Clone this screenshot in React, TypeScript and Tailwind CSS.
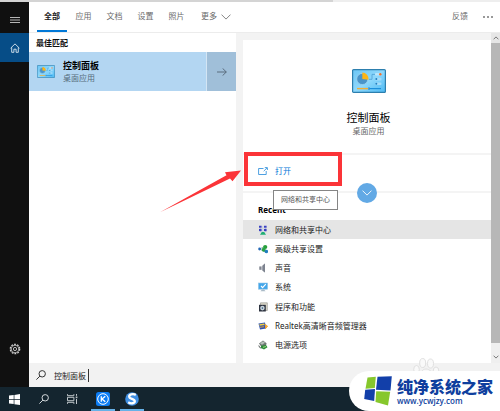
import type { ReactNode } from "react";

const FONT = "font-['Noto_Sans','Noto_Sans_CJK_SC',sans-serif]";

const tabs = ["全部", "应用", "文档", "设置", "照片"];

function ControlPanelIcon({ className }: { className: string }) {
  return (
    <svg viewBox="0 0 34 24" className={className} aria-hidden="true">
      <defs>
        <linearGradient id="panel" x1="0" y1="0" x2="1" y2="1">
          <stop offset="0" stopColor="#6cc6f5" />
          <stop offset=".5" stopColor="#8ed8fc" />
          <stop offset="1" stopColor="#4dbaf4" />
        </linearGradient>
      </defs>
      <rect x=".6" y=".6" width="32.8" height="22.8" rx="1" fill="url(#panel)" stroke="#2d7fae" strokeWidth="1.2" />
      <circle cx="10.3" cy="10" r="5.6" fill="#4a94c9" stroke="#9fd3ee" strokeWidth=".8" />
      <path d="M10.3 10V3.600a6.400 6.400 0 0 1 6.200 7.200z" fill="#fdb515" />
      <path d="M17 10.300h3V5.400h3" fill="none" stroke="#4ba0d4" strokeWidth=".8" />
      <rect x="23" y="4" width="6.500" height="2.600" rx="1" fill="#b8e4fb" />
      <rect x="23" y="8.800" width="6.500" height="2.600" rx="1" fill="#a5dcfa" />
      <rect x="23" y="13.500" width="6.500" height="2.600" rx="1" fill="#a5dcfa" />
      <circle cx="28.300" cy="5.300" r="1.200" fill="#f4702b" />
      <circle cx="24.300" cy="10.100" r="1" fill="#1f7fc0" />
      <circle cx="24.300" cy="14.800" r="1" fill="#1f7fc0" />
      <path d="M5 19.600h11" stroke="#f3ad35" strokeWidth="1.400" />
      <path d="M17.500 19.600H29" stroke="#1c8fdb" strokeWidth="1.200" />
      <path d="M17 18.300v2.600" stroke="#1c76b8" strokeWidth="1" />
    </svg>
  );
}

const NetworkIcon = (
  <svg viewBox="0 0 10 10" className="size-[10px]" aria-hidden="true">
    <path d="M1 .8h2.600v2H1zM6 .8h2.600v2H6zM1 4h2.600v2H1zM6 4h2.600v2H6z" fill="#3940c2" />
    <path d="M1.500 3.300h2M6.500 3.300h2M1.500 6.600h2M6.500 6.600h2" stroke="#8d94cf" strokeWidth=".7" />
    <path d="M4.900 1v6.500" stroke="#a9b8d8" strokeWidth=".6" />
    <path d="M2 9.700 3.800 7h2.400L8 9.700z" fill="#1fae75" />
  </svg>
);

const ShareIcon = (
  <svg viewBox="0 0 10 10" className="size-[10px]" aria-hidden="true">
    <path d="M1.500 5 7 2.400M1.500 5l6 3" stroke="#7fae9b" strokeWidth=".9" />
    <circle cx="1.600" cy="5" r="1.400" fill="#2368b7" />
    <circle cx="7.200" cy="3" r="2.100" fill="#28a03c" />
    <circle cx="5.700" cy="5.800" r="2" fill="#2aa346" />
    <circle cx="8.300" cy="7.500" r="1.800" fill="#217dbe" />
  </svg>
);

const SoundIcon = (
  <svg viewBox="0 0 10 10" className="size-[10px]" aria-hidden="true">
    <path d="M1.500 3.500h2L7 .5v9L3.500 6.800h-2z" fill="#b3b6be" />
    <path d="M4.600 2.500 7 .5v9L4.600 7.700z" fill="#7d838f" />
    <path d="M1.500 3.500h1.200v3.300H1.500z" fill="#6d737f" />
  </svg>
);

const SystemIcon = (
  <svg viewBox="0 0 10 10" className="size-[10px]" aria-hidden="true">
    <rect x=".4" y="1" width="9.200" height="6.200" fill="#43a6ea" stroke="#94c6e6" strokeWidth=".6" />
    <path d="m3 4 1.600 1.600L7.800 2.200" fill="none" stroke="#fff" strokeWidth="1.100" />
    <path d="M2.500 9.200h5L6 7.500H4z" fill="#a9bac7" />
  </svg>
);

const ProgramsIcon = (
  <svg viewBox="0 0 10 10" className="size-[10px]" aria-hidden="true">
    <path d="M2.500.8h6.800v7.700H2.500z" fill="#dcd9c9" stroke="#8b8b86" strokeWidth=".6" />
    <rect x="1" y="2.800" width="6.800" height="6.700" fill="#2e3440" />
    <circle cx="4.400" cy="6.100" r="2.300" fill="#c7d2da" />
    <circle cx="4.400" cy="6.100" r=".8" fill="#3c6382" />
  </svg>
);

const RealtekIcon = (
  <svg viewBox="0 0 10 10" className="size-[10px]" aria-hidden="true">
    <path d="M.5 2.500 7 1.500l1 6-6 1z" fill="#2f55b5" />
    <path d="m1.300 3.300 5-.8.300 1.500-5 .8z" fill="#f3cf3e" />
    <path d="m2 6.300 4-.6M7.300 3.500l2.300 1.700-2 2.300z" stroke="#ef9d2c" strokeWidth=".9" fill="#f3b63a" />
  </svg>
);

const PowerIcon = (
  <svg viewBox="0 0 10 10" className="size-[10px]" aria-hidden="true">
    <path d="m1 3.600 4-3 3.600 2.600-.8 3L3.500 7z" fill="#6d7672" />
    <path d="m2 3.300 3-2 2 1.500-3 2z" fill="#b6c0ba" />
    <path d="M3 5.800 8 5l1.500 2.300L6 9.500 3 8z" fill="#2b8d3a" />
    <path d="m5 7.300 3-.8" stroke="#aadd87" strokeWidth=".9" />
    <path d="M.8 5.500q.5 2.500 2.500 2.700" fill="none" stroke="#43494a" strokeWidth=".9" />
  </svg>
);

const recent: { label: string; icon: ReactNode }[] = [
  { label: "网络和共享中心", icon: NetworkIcon },
  { label: "高级共享设置", icon: ShareIcon },
  { label: "声音", icon: SoundIcon },
  { label: "系统", icon: SystemIcon },
  { label: "程序和功能", icon: ProgramsIcon },
  { label: "Realtek高清晰音频管理器", icon: RealtekIcon },
  { label: "电源选项", icon: PowerIcon },
];

function Sidebar() {
  return (
    <nav className="flex w-[29px] shrink-0 flex-col bg-[#101010] text-[#e4e4e4]">
      <button aria-label="菜单" className="flex h-[31px] items-center justify-center pt-1">
        <svg viewBox="0 0 10 8" className="h-2 w-[10px]">
          <path d="M0 1.500h10M0 4h10M0 6.500h10" stroke="#b5b5b5" strokeWidth="1" />
        </svg>
      </button>
      <button aria-label="主页" className="flex h-[29px] items-center justify-center bg-[#064d87]">
        <svg viewBox="0 0 10 10" className="size-[10px]" fill="none" stroke="#dbe8f2" strokeWidth=".9">
          <path d="M.6 5.200 5 .9l4.400 4.300M1.700 4.400v4.900h2.200V6.200h2.200v3.100h2.200V4.400" />
        </svg>
      </button>
      <button aria-label="设置" className="mt-auto mb-6 flex h-[29px] items-center justify-center">
        <svg viewBox="0 0 12 12" className="size-3" fill="none" stroke="#cfcfcf">
          <circle cx="6" cy="6" r="4.700" strokeWidth="1.300" strokeDasharray="1.850 1.100" />
          <circle cx="6" cy="6" r="3.800" strokeWidth=".8" />
          <circle cx="6" cy="6" r="1.600" strokeWidth=".9" />
        </svg>
      </button>
    </nav>
  );
}

function Header() {
  return (
    <header className="flex h-[31px] shrink-0 items-stretch border-b border-[#ececec] bg-white pr-[7px] pl-2 text-[8px] text-[#6b6b6b]">
      {tabs.map((tab, i) => (
        <button
          key={tab}
          className={
            i === 0
              ? "w-[30px] border-b-2 border-[#0078d7] font-bold text-[#1a1a1a]"
              : "w-[31px] border-b-2 border-transparent pl-[2px]"
          }
        >
          {tab}
        </button>
      ))}
      <button className="ml-[10px] flex items-center gap-1 border-b-2 border-transparent">
        更多
        <svg viewBox="0 0 10 6" className="mt-[2px] h-[6px] w-[10px]" fill="none" stroke="#777" strokeWidth=".9">
          <path d="m.5.600 4.500 4.500L9.500.600" />
        </svg>
      </button>
      <button className="ml-auto border-b-2 border-transparent">反馈</button>
      <button aria-label="更多选项" className="ml-[15px] flex items-center">
        <svg viewBox="0 0 10 2" className="h-[2px] w-[10px]" fill="#999">
          <path d="M0 0h2v2H0zM4 0h2v2H4zM8 0h2v2H8z" />
        </svg>
      </button>
    </header>
  );
}

function Results() {
  return (
    <section className="w-[207px] shrink-0 bg-white">
      <h2 className="flex h-[19px] items-center pl-[7px] text-[8px] font-bold text-[#111]">最佳匹配</h2>
      <div className="flex h-[39px]">
        <button className="flex flex-1 items-center gap-2 border-r border-[#d3e5f4] bg-[#b3d6f2] pl-2 text-left">
          <ControlPanelIcon className="h-[13px] w-[18px]" />
          <span className="flex flex-col">
            <span className="text-[9px] leading-3 font-bold text-black">控制面板</span>
            <span className="text-[8px] leading-3 text-[#566c7c]">桌面应用</span>
          </span>
        </button>
        <button aria-label="展开" className="flex w-[29px] items-center justify-center bg-[#a0bfd9]">
          <svg viewBox="0 0 10 8" className="h-2 w-[10px]" fill="none" stroke="#536475" strokeWidth=".9">
            <path d="M0 4h9.300M5.600.4 9.300 4 5.600 7.600" />
          </svg>
        </button>
      </div>
    </section>
  );
}

function OpenRow() {
  return (
    <div className="relative flex h-10 items-center border-y-2 border-[#f4f4f4] pb-1 pl-[15px]">
      <button className="flex items-center gap-[7px] text-[8px] text-[#0078d7]">
        <svg viewBox="0 0 10 8" className="h-2 w-[10px]" fill="none" stroke="#3a95de" strokeWidth=".9">
          <path d="M5.500 1.500H.6v6h7.600V4M5.700 4.200 9 .9M6.800.6h2.600V3" />
        </svg>
        打开
      </button>
      <div className="absolute -top-[3px] left-[1px] h-[34px] w-[98px] border-4 border-[#fb3438]" />
      <svg viewBox="0 0 82 44" className="absolute top-[14px] -left-[83px] h-11 w-[82px]" aria-hidden="true">
        <path d="M0 43.200 66.500 6.200 65 3.300 81 1.500 72.500 12.200 70 9.500z" fill="#fb3438" />
      </svg>
      <button
        aria-label="展开更多"
        className="absolute top-[28px] left-1/2 flex size-5 -translate-x-1/2 items-center justify-center rounded-full bg-[#62a9e5]"
      >
        <svg viewBox="0 0 10 6" className="h-[6px] w-[10px]" fill="none" stroke="#fff" strokeWidth=".9">
          <path d="m.5.600 4.500 4.500L9.500.600" />
        </svg>
      </button>
      <div
        role="tooltip"
        className="absolute top-[35px] left-[30px] z-10 flex h-5 items-center border border-[#858585] bg-white px-[7px] text-[7px] whitespace-nowrap text-[#555]"
      >
        网络和共享中心
      </div>
    </div>
  );
}

function Details() {
  return (
    <section className="flex min-w-0 flex-1 flex-col bg-white">
      <div className="flex h-[113px] flex-col items-center pt-[29px] pl-[3px]">
        <ControlPanelIcon className="h-6 w-[34px]" />
        <h1 className="mt-[17px] text-[11px] leading-[15px] text-black">控制面板</h1>
        <p className="text-[8px] leading-3 text-[#666]">桌面应用</p>
      </div>
      <OpenRow />
      <h2 className="flex h-[27px] items-center pt-[6px] pl-[15px] text-[8px] font-bold text-black">Recent</h2>
      <ul className="flex h-[135px] flex-col text-[8px] text-[#222]">
        {recent.map((item, i) => (
          <li key={item.label} className={i === 0 ? "flex flex-1 bg-[#e5e5e5]" : "flex flex-1"}>
            <button className="flex flex-1 items-center gap-[7px] pl-[15px] text-left">
              {item.icon}
              {item.label}
            </button>
          </li>
        ))}
      </ul>
    </section>
  );
}

function Scrollbar() {
  return (
    <div className="flex w-[9px] shrink-0 flex-col bg-[#efefef]" aria-hidden="true">
      <span className="flex h-[10px] items-center justify-center bg-[#e6e6e6]">
        <svg viewBox="0 0 6 4" className="h-1 w-[6px]" fill="none" stroke="#777">
          <path d="m.6 3.300 2.400-2.400 2.400 2.400" />
        </svg>
      </span>
      <span className="flex-1 bg-[#b7b7b7]" />
      <span className="flex h-5 items-center justify-center pt-2">
        <svg viewBox="0 0 6 4" className="h-1 w-[6px]" fill="none" stroke="#777">
          <path d="m.6.700 2.400 2.400 2.400-2.400" />
        </svg>
      </span>
    </div>
  );
}

function SearchGlyph({ className }: { className: string }) {
  return (
    <svg viewBox="0 0 10 10" className={className} fill="none" stroke="currentColor" strokeWidth="1" aria-hidden="true">
      <circle cx="6.200" cy="3.800" r="3.200" />
      <path d="M3.900 6.100.4 9.600" />
    </svg>
  );
}

function Taskbar() {
  return (
    <footer className="flex h-6 shrink-0 bg-[#14252f] text-[#d5dadd]">
      <button aria-label="开始" className="flex w-[29px] items-center justify-center">
        <svg viewBox="0 0 11 11" className="size-[11px]" fill="#fff">
          <path d="M0 1.600 4.700 1v4.200H0zM5.400.9 11 .1v5.100H5.400zM0 5.900h4.700V10L0 9.400zM5.400 5.900H11V11l-5.600-.8z" />
        </svg>
      </button>
      <button aria-label="搜索" className="flex w-[29px] items-center justify-center">
        <SearchGlyph className="size-[10px]" />
      </button>
      <button aria-label="任务视图" className="flex w-[29px] items-center justify-center">
        <svg viewBox="0 0 11 10" className="h-[10px] w-[11px]" fill="none" stroke="#c0c7cb">
          <path d="M.5.200v1.500h6.400V.200M.5 9.800V8.300h6.400v1.500M.5 3.300h6.400v3.400H.5zM9.500 0v1.800M9.500 5v5" />
          <path d="M8.700 2.500h1.700v1.700H8.700z" fill="#c0c7cb" stroke="none" />
        </svg>
      </button>
      <button aria-label="酷狗音乐" className="ml-1 flex w-6 items-center justify-center border-b-2 border-[#66b2e8] pt-[1px]">
        <svg viewBox="0 0 14 14" className="size-[14px]" fill="none">
          <rect width="14" height="14" rx="2.500" fill="#0c7cf4" />
          <circle cx="7" cy="7" r="5.300" stroke="#fff" strokeWidth="1" />
          <path d="M5.300 4.200v5.600M9.300 4.200 6 7l3.300 2.800" stroke="#fff" strokeWidth="1.300" />
        </svg>
      </button>
      <button aria-label="搜狗浏览器" className="ml-[5px] flex w-6 items-center justify-center border-b-2 border-[#66b2e8] pt-[1px]">
        <svg viewBox="0 0 14 14" className="size-[14px]" fill="none">
          <circle cx="7" cy="7" r="6.800" fill="#408fe2" />
          <path
            d="M10.800 2.900C7.800 1.400 4 2.500 4.200 4.800c.2 2.300 5.600 2 5.600 4.500 0 2.200-3.900 2.700-6.600 1"
            stroke="#fff"
            strokeWidth="2.300"
          />
        </svg>
      </button>
    </footer>
  );
}

function Watermark() {
  return (
    <div className="absolute right-0 bottom-0">
      <svg viewBox="0 0 60 24" className="absolute -top-[14px] left-[60px] h-6 w-[60px]" fill="#f9f9f9" stroke="#dcdcdc" strokeWidth=".9" aria-hidden="true">
        <ellipse cx="13.700" cy="6" rx="3" ry="4.500" />
        <ellipse cx="21.500" cy="6.500" rx="3" ry="4.500" />
        <ellipse cx="7.500" cy="12.500" rx="2.800" ry="4" />
        <ellipse cx="27" cy="14" rx="2.800" ry="4" />
        <path d="M17 12c-4 0-5 4-8 7v5h18v-5c-4-3-6-7-10-7z" />
      </svg>
      <div className="relative flex h-10 items-center gap-[5px] rounded-l-full bg-white pr-[7px] pl-[15px]">
        <svg viewBox="0 0 28 30" className="h-[30px] w-7" aria-hidden="true">
          <path d="M3.500 1.500 11.800.8 10.800 12 1.500 12.800z" fill="#86c72c" />
          <path d="M13.500.8 27.800.2 26.500 14.500 12 13.800z" fill="#123fa9" />
          <path d="M1.200 13.800 11 13 10.200 25 .2 23z" fill="#123fa9" />
          <path d="M12.200 15.200 26.200 15.800 24 29.500 11.500 26z" fill="#86c72c" />
        </svg>
        <div className="pt-[1px] text-[#0f3f9e]">
          <div className="font-['Liberation_Sans','Noto_Sans_CJK_SC',sans-serif] text-[16px] leading-[18px] font-black whitespace-nowrap">
            纯净系统之家
          </div>
          <div className="font-['Open_Sans',sans-serif] text-[8px] leading-2 font-semibold">www.ycwjzy.com</div>
        </div>
      </div>
    </div>
  );
}

export default function App() {
  return (
    <div className={`relative flex h-screen flex-col overflow-hidden bg-white ${FONT}`}>
      <div className="flex h-[2px] shrink-0 bg-[#eeeeee]">
        <span className="w-2/3 bg-[#d4d4d4]" />
      </div>
      <div className="flex min-h-0 flex-1">
        <Sidebar />
        <div className="flex min-w-0 flex-1 flex-col">
          <Header />
          <main className="flex min-h-0 flex-1 bg-[#f3f3f3]">
            <Results />
            <div className="flex min-w-0 flex-1 pt-[7px] pl-[7px]">
              <Details />
            </div>
            <Scrollbar />
          </main>
          <label className="flex h-6 shrink-0 items-center gap-2 bg-[#f2f2f2] pl-[7px] text-[#333]">
            <SearchGlyph className="size-[10px]" />
            <span className="flex items-center">
              <input
                aria-label="搜索"
                defaultValue="控制面板"
                className="h-4 w-[34px] bg-transparent text-[8px] text-[#222] outline-none"
              />
              <span className="h-[13px] w-px bg-[#333]" />
            </span>
          </label>
        </div>
      </div>
      <Taskbar />
      <Watermark />
    </div>
  );
}
